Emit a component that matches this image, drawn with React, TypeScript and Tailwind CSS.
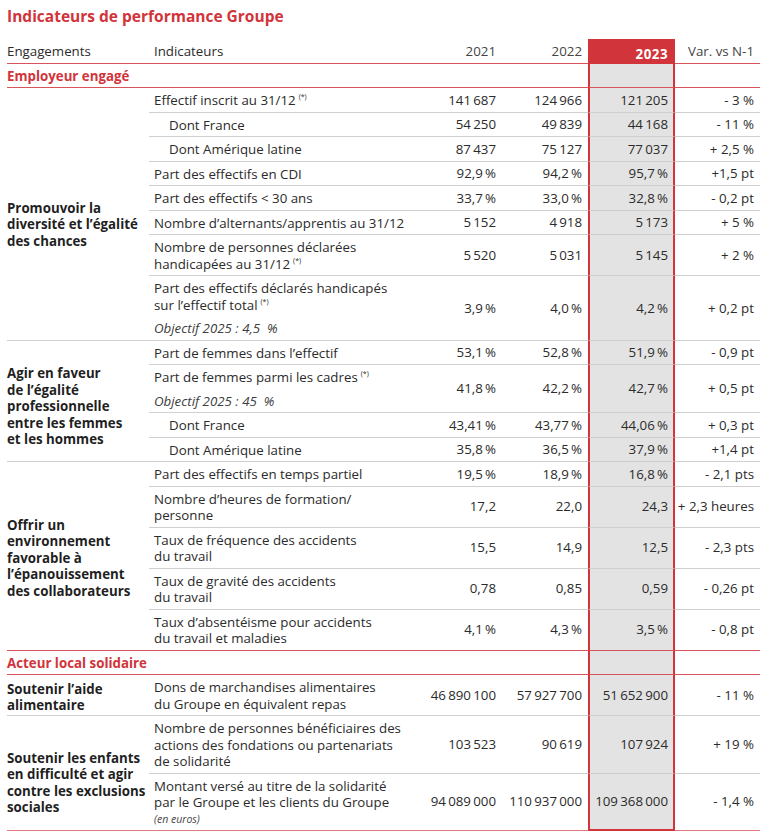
import React from "react";

type B = "g" | "r" | "last";

function bcls(b: B) {
  if (b === "g") return "border-b border-b-[#cfcfcf]";
  if (b === "r") return "border-b border-b-[#d9545a]";
  return "border-b border-b-[#e07b7f]";
}

function Sup() {
  return (
    <span className="inline-block align-top text-[7px] leading-none ml-[3px] relative top-[1px]">(*)</span>
  );
}

function Row({
  eng,
  ind,
  indent,
  v,
  b = "g",
}: {
  eng?: React.ReactNode;
  ind: React.ReactNode;
  indent?: boolean;
  v: string[];
  b?: B;
}) {
  const bc = bcls(b);
  const y23 = b === "last" ? "border-b-2 border-b-[#d1343a]" : bc;
  return (
    <tr>
      {eng}
      <td className={`${bc} ${indent ? "pl-[20px]" : "pl-[5px]"} pt-[4px] pb-[3px] align-middle`}>{ind}</td>
      <td className={`${bc} text-right pr-[6px] align-middle whitespace-nowrap`}>{v[0]}</td>
      <td className={`${bc} text-right pr-[6px] align-middle whitespace-nowrap`}>{v[1]}</td>
      <td
        className={`${y23} text-right pr-[5px] align-middle whitespace-nowrap bg-[#e3e3e3] border-x-2 border-x-[#d1343a]`}
      >
        {v[2]}
      </td>
      <td className={`${bc} text-right pr-[6px] align-middle whitespace-nowrap`}>{v[3]}</td>
    </tr>
  );
}

function Eng({ n, pt, children, b = "g" }: { n: number; pt: string; children: React.ReactNode; b?: B }) {
  return (
    <td rowSpan={n} className={`${bcls(b)} align-middle font-bold text-[#1f1f1f] leading-[16.5px] ${pt}`}>
      {children}
    </td>
  );
}

function Section({ label }: { label: string }) {
  return (
    <tr>
      <td colSpan={4} className="border-b border-b-[#d9545a] pt-[4px] pb-[3px] font-bold text-[#d1343a]">
        {label}
      </td>
      <td className="border-b border-b-[#d9545a] bg-[#e3e3e3] border-x-2 border-x-[#d1343a]"></td>
      <td className="border-b border-b-[#d9545a]"></td>
    </tr>
  );
}

const n = (s: string) => s.replace(/ /g, "\u2009");

function Obj({ children }: { children: React.ReactNode }) {
  return <div className="italic text-[#3d3d3d] mt-[7px]">{children}</div>;
}

export default function App() {
  return (
    <div
      className="w-[768px] h-[839px] bg-white text-[13.3px] leading-[16.5px] text-[#2b2b2b] px-[7px]"
      style={{ fontFamily: '"Open Sans", "Liberation Sans", sans-serif' }}
    >
      <div className="pt-[6px] h-[39px] text-[15.5px] leading-[20px] font-bold text-[#d1343a]">
        Indicateurs de performance Groupe
      </div>
      <table className="w-[753px] table-fixed border-separate border-spacing-0">
        <colgroup>
          <col className="w-[142px]" />
          <col className="w-[273px]" />
          <col className="w-[80px]" />
          <col className="w-[86px]" />
          <col className="w-[87px]" />
          <col className="w-[85px]" />
        </colgroup>
        <tbody>
          <tr>
            <td className="border-b border-b-[#d9545a] pt-[4px] pb-[3px]">Engagements</td>
            <td className="border-b border-b-[#d9545a] pt-[4px] pb-[3px] pl-[5px]">Indicateurs</td>
            <td className="border-b border-b-[#d9545a] pt-[4px] pb-[3px] text-right pr-[6px] text-[#444]">2021</td>
            <td className="border-b border-b-[#d9545a] pt-[4px] pb-[3px] text-right pr-[6px] text-[#444]">2022</td>
            <td className="border-b border-b-[#d1343a] pt-[7px] pb-[0px] text-right pr-[5px] bg-[#d1343a] border-x-2 border-x-[#d1343a] text-white font-bold tracking-[0.5px]">
              2023
            </td>
            <td className="border-b border-b-[#d9545a] pt-[4px] pb-[3px] text-right pr-[6px] text-[#444]">Var. vs N-1</td>
          </tr>
          <Section label="Employeur engagé" />
          <Row
            eng={
              <Eng n={8} pt="pt-[21px]">
                Promouvoir la
                <br />
                diversité et l’égalité
                <br />
                des chances
              </Eng>
            }
            ind={
              <>
                Effectif inscrit au 31/12<Sup />
              </>
            }
            v={[n("141 687"), n("124 966"), n("121 205"), "- 3 %"]}
          />
          <Row indent ind="Dont France" v={[n("54 250"), n("49 839"), n("44 168"), "- 11 %"]} />
          <Row indent ind="Dont Amérique latine" v={[n("87 437"), n("75 127"), n("77 037"), "+ 2,5 %"]} />
          <Row ind="Part des effectifs en CDI" v={[n("92,9 %"), n("94,2 %"), n("95,7 %"), "+1,5 pt"]} />
          <Row ind="Part des effectifs < 30 ans" v={[n("33,7 %"), n("33,0 %"), n("32,8 %"), "- 0,2 pt"]} />
          <Row ind="Nombre d’alternants/apprentis au 31/12" v={[n("5 152"), n("4 918"), n("5 173"), "+ 5 %"]} />
          <Row
            ind={
              <>
                Nombre de personnes déclarées
                <br />
                handicapées au 31/12
                <Sup />
              </>
            }
            v={[n("5 520"), n("5 031"), n("5 145"), "+ 2 %"]}
          />
          <Row
            ind={
              <>
                <div>
                  Part des effectifs déclarés handicapés
                  <br />
                  sur l’effectif total
                  <Sup />
                </div>
                <Obj>Objectif 2025 : 4,5&nbsp;&nbsp;%</Obj>
              </>
            }
            v={[n("3,9 %"), n("4,0 %"), n("4,2 %"), "+ 0,2 pt"]}
          />
          <Row
            eng={
              <Eng n={4} pt="pt-[11px]">
                Agir en faveur
                <br />
                de l’égalité
                <br />
                professionnelle
                <br />
                entre les femmes
                <br />
                et les hommes
              </Eng>
            }
            ind="Part de femmes dans l’effectif"
            v={[n("53,1 %"), n("52,8 %"), n("51,9 %"), "- 0,9 pt"]}
          />
          <Row
            ind={
              <>
                <div>
                  Part de femmes parmi les cadres
                  <Sup />
                </div>
                <Obj>Objectif 2025 : 45&nbsp;&nbsp;%</Obj>
              </>
            }
            v={[n("41,8 %"), n("42,2 %"), n("42,7 %"), "+ 0,5 pt"]}
          />
          <Row indent ind="Dont France" v={[n("43,41 %"), n("43,77 %"), n("44,06 %"), "+ 0,3 pt"]} />
          <Row indent ind="Dont Amérique latine" v={[n("35,8 %"), n("36,5 %"), n("37,9 %"), "+1,4 pt"]} />
          <Row
            eng={
              <Eng n={5} pt="pt-[4px]" b="r">
                Offrir un
                <br />
                environnement
                <br />
                favorable à
                <br />
                l’épanouissement
                <br />
                des collaborateurs
              </Eng>
            }
            ind="Part des effectifs en temps partiel"
            v={[n("19,5 %"), n("18,9 %"), n("16,8 %"), "- 2,1 pts"]}
          />
          <Row
            ind={
              <>
                Nombre d’heures de formation/
                <br />
                personne
              </>
            }
            v={["17,2", "22,0", "24,3", "+ 2,3 heures"]}
          />
          <Row
            ind={
              <>
                Taux de fréquence des accidents
                <br />
                du travail
              </>
            }
            v={["15,5", "14,9", "12,5", "- 2,3 pts"]}
          />
          <Row
            ind={
              <>
                Taux de gravité des accidents
                <br />
                du travail
              </>
            }
            v={["0,78", "0,85", "0,59", "- 0,26 pt"]}
          />
          <Row
            b="r"
            ind={
              <>
                Taux d’absentéisme pour accidents
                <br />
                du travail et maladies
              </>
            }
            v={[n("4,1 %"), n("4,3 %"), n("3,5 %"), "- 0,8 pt"]}
          />
          <Section label="Acteur local solidaire" />
          <Row
            eng={
              <Eng n={1} pt="pt-[4px]">
                Soutenir l’aide
                <br />
                alimentaire
              </Eng>
            }
            ind={
              <>
                Dons de marchandises alimentaires
                <br />
                du Groupe en équivalent repas
              </>
            }
            v={[n("46 890 100"), n("57 927 700"), n("51 652 900"), "- 11 %"]}
          />
          <Row
            eng={
              <Eng n={2} pt="pt-[20px]" b="last">
                Soutenir les enfants
                <br />
                en difficulté et agir
                <br />
                contre les exclusions
                <br />
                sociales
              </Eng>
            }
            ind={
              <>
                Nombre de personnes bénéficiaires des
                <br />
                actions des fondations ou partenariats
                <br />
                de solidarité
              </>
            }
            v={[n("103 523"), n("90 619"), n("107 924"), "+ 19 %"]}
          />
          <Row
            b="last"
            ind={
              <>
                Montant versé au titre de la solidarité
                <br />
                par le Groupe et les clients du Groupe
                <div className="italic text-[10.5px] leading-[16px] text-[#444]">(en euros)</div>
              </>
            }
            v={[n("94 089 000"), n("110 937 000"), n("109 368 000"), "- 1,4 %"]}
          />
        </tbody>
      </table>
    </div>
  );
}
